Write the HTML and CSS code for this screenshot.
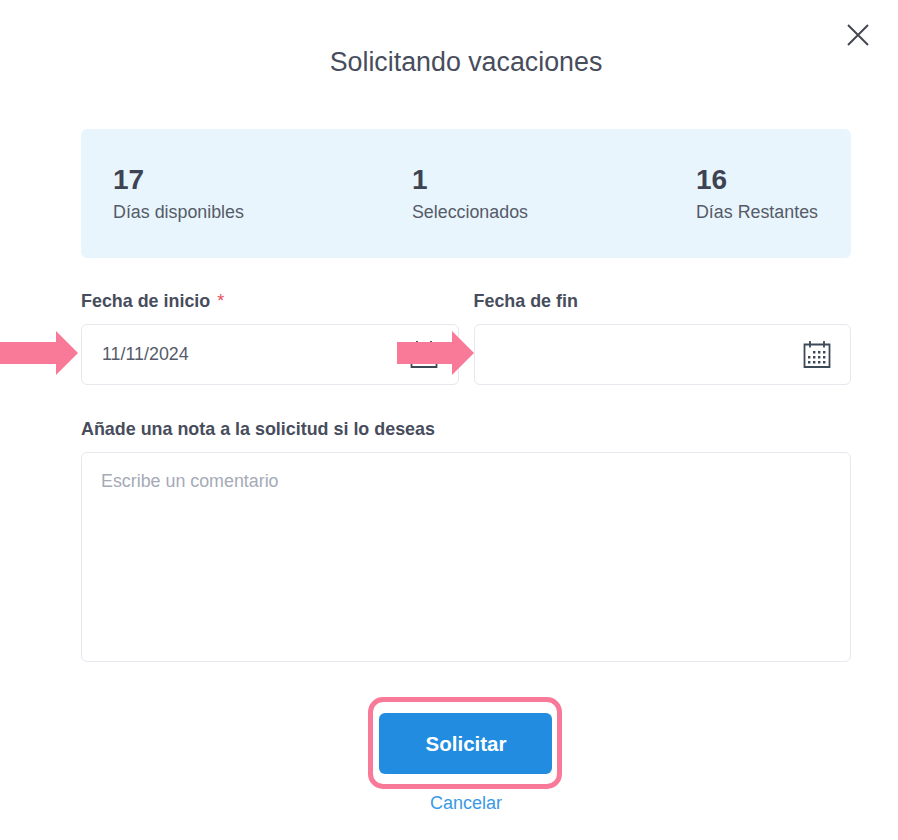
FILE: index.html
```html
<!DOCTYPE html>
<html lang="es">
<head>
<meta charset="utf-8">
<title>Solicitando vacaciones</title>
<link rel="stylesheet" href="styles.css">
</head>
<body>
<main class="modal">
  <button class="close" aria-label="Cerrar">
    <svg width="24" height="24" viewBox="0 0 24 24"><path d="M2 2 L22 22 M22 2 L2 22" class="close-x"/></svg>
  </button>
  <h1 class="title">Solicitando vacaciones</h1>
  <section class="summary">
    <div class="stat"><strong class="num">17</strong><span class="cap">Días disponibles</span></div>
    <div class="stat"><strong class="num">1</strong><span class="cap">Seleccionados</span></div>
    <div class="stat"><strong class="num">16</strong><span class="cap">Días Restantes</span></div>
  </section>
  <section class="dates">
    <div class="field">
      <label class="label">Fecha de inicio <span class="req">*</span></label>
      <div class="input">
        <span class="value">11/11/2024</span>
        <svg class="cal" width="28" height="28" viewBox="0 0 28 28"><use href="#cal"/></svg>
      </div>
      <svg class="arrow arrow-a" width="78" height="44" viewBox="0 0 78 44"><polygon points="0,11 56,11 56,0 78,22 56,44 56,33 0,33"/></svg>
      <svg class="arrow arrow-b" width="77" height="44" viewBox="0 0 77 44"><polygon points="0,11 55,11 55,0 77,22 55,44 55,33 0,33"/></svg>
    </div>
    <div class="field">
      <label class="label">Fecha de fin</label>
      <div class="input">
        <span class="value"></span>
        <svg class="cal" width="28" height="28" viewBox="0 0 28 28">
          <defs>
            <g id="cal">
              <path d="M7 4.5H1.5V27H26.5V4.5H21 M7 4.5H21 M7 1V7.5 M21 1V7.5" fill="none" stroke="#3c4a58" stroke-width="1.8"/>
              <path d="M10 11h2.4v2.4h-2.4z M15 11h2.4v2.4h-2.4z M20 11h2.4v2.4h-2.4z M5 16h2.4v2.4H5z M10 16h2.4v2.4h-2.4z M15 16h2.4v2.4h-2.4z M20 16h2.4v2.4h-2.4z M5 21h2.4v2.4H5z M10 21h2.4v2.4h-2.4z M15 21h2.4v2.4h-2.4z M20 21h2.4v2.4h-2.4z" fill="#3c4a58"/>
            </g>
          </defs>
          <use href="#cal"/>
        </svg>
      </div>
    </div>
  </section>
  <label class="label note-label">Añade una nota a la solicitud si lo deseas</label>
  <div class="note">Escribe un comentario</div>
  <div class="actions">
    <div class="highlight"><button class="submit">Solicitar</button></div>
    <a class="cancel">Cancelar</a>
  </div>
</main>
</body>
</html>
```
FILE: styles.css
```css
* { box-sizing: border-box; }
html, body { margin: 0; background: #fff; }
body { font-family: "Liberation Sans", Arial, sans-serif; color: #3d4352; }
.modal { position: relative; width: 898px; height: 840px; padding: 0 47px 0 81px; overflow: hidden; }
.close { position: absolute; left: 846px; top: 23px; width: 24px; height: 24px; padding: 0; border: 0; background: none; }
.close svg { display: block; }
.close-x { stroke: #41454f; stroke-width: 1.9; fill: none; }
.title { margin: 0; padding-top: 47px; height: 129px; font-size: 26.8px; line-height: 30px; font-weight: 400; text-align: center; color: #474d5c; }
.summary { height: 129px; background: #e9f5fc; border-radius: 6px; padding: 35px 33px 0 32px; display: flex; justify-content: space-between; }
.stat { display: flex; flex-direction: column; }
.num { font-size: 28px; line-height: 32px; font-weight: 700; color: #3d4352; }
.cap { margin-top: 5px; font-size: 17.85px; line-height: 22px; color: #555b69; }
.dates { display: flex; gap: 15px; margin-top: 33px; }
.field { position: relative; flex: 1 1 0; }
.label { display: block; font-size: 17.9px; line-height: 20px; font-weight: 700; color: #474d5c; }
.req { color: #e8505b; font-weight: 400; margin-left: 2px; }
.input { margin-top: 13px; height: 61px; border: 1.5px solid #e6e8ee; border-radius: 6px; display: flex; align-items: center; justify-content: space-between; padding: 0 19.5px 0 20px; }
.value { font-size: 17.85px; color: #555b69; }
.cal { display: block; margin-top: -1px; }
.arrow { position: absolute; fill: #f97a98; }
.arrow-a { left: -81px; top: 40px; }
.arrow-b { left: 316px; top: 40px; }
.note-label { margin-top: 34px; }
.note { margin-top: 13px; height: 210px; border: 1.5px solid #e6e8ee; border-radius: 6px; padding: 16px 19px; font-size: 17.85px; line-height: 24px; color: #a5aab6; }
.actions { display: flex; flex-direction: column; align-items: center; margin-top: 35px; }
.highlight { width: 194px; height: 92px; margin-right: 2px; border: 5px solid #f97a98; border-radius: 15px; display: flex; align-items: center; justify-content: center; }
.submit { width: 173px; height: 61px; margin-top: 1px; border: 0; border-radius: 6px; background: #228de0; color: #fff; font-family: inherit; font-size: 20.5px; font-weight: 700; padding: 0 0 0 2px; }
.cancel { margin-top: 3px; font-size: 18px; line-height: 22px; color: #3b99e3; }
```
